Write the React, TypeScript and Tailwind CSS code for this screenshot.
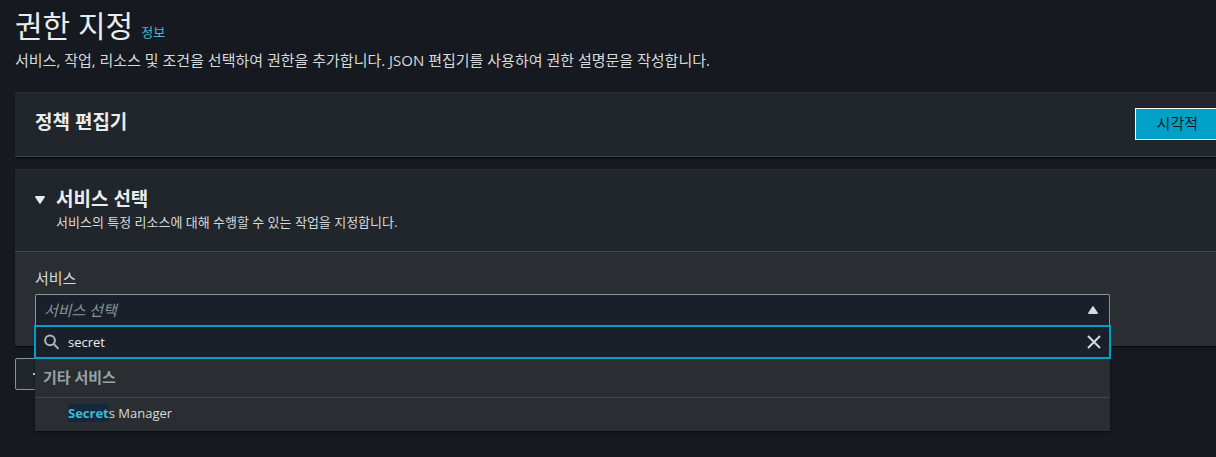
import { useState } from "react";

const SERVICES = ["Secrets Manager"];

function Highlight({ text, query }: { text: string; query: string }) {
  const at = query ? text.toLowerCase().indexOf(query.toLowerCase()) : -1;
  if (at < 0) return <>{text}</>;
  return (
    <>
      {text.slice(0, at)}
      <mark className="bg-[#12293b] font-bold text-[#44b9d6]">{text.slice(at, at + query.length)}</mark>
      {text.slice(at + query.length)}
    </>
  );
}

function ServiceSelect() {
  const [query, setQuery] = useState("secret");
  const matches = SERVICES.filter((s) => s.toLowerCase().includes(query.toLowerCase()));

  return (
    <div className="relative">
      <button
        id="service"
        type="button"
        aria-haspopup="listbox"
        aria-expanded="true"
        className="flex h-8 w-full items-center justify-between rounded-t-xs border border-b-0 border-[#879596] bg-[#1a2029] pr-[11px] pb-0.5 pl-2 text-left"
      >
        <span className="text-[#879596] italic">서비스 선택</span>
        <svg viewBox="0 0 10 8" className="h-2 w-2.5" aria-hidden="true">
          <path d="M5 0.8 9.2 7.2H0.8Z" fill="#d5dbdb" stroke="#d5dbdb" strokeWidth="1.4" strokeLinejoin="round" />
        </svg>
      </button>

      <div className="absolute inset-x-0 top-full z-10 bg-[#2a2e33] shadow-[0_1px_2px_#000000a0]">
        <div className="-mx-px -mt-px flex h-[34px] items-center gap-2 border-2 border-[#00a1c9] bg-[#1a2029] px-2">
          <svg viewBox="0 0 16 16" className="size-4 shrink-0" fill="none" stroke="#aab7b8" strokeWidth="2" aria-hidden="true">
            <circle cx="6" cy="6.3" r="4.9" />
            <path d="m9.6 9.9 4.8 4.8" />
          </svg>
          <input
            type="text"
            aria-label="서비스 검색"
            value={query}
            onChange={(e) => setQuery(e.target.value)}
            className="min-w-0 flex-1 bg-transparent text-[13px] text-[#eaeded] outline-none"
          />
          <button type="button" aria-label="지우기" onClick={() => setQuery("")} className="shrink-0">
            <svg viewBox="0 0 14 14" className="size-3.5" fill="none" stroke="#d5dbdb" strokeWidth="2" aria-hidden="true">
              <path d="m1 1 12 12M13 1 1 13" />
            </svg>
          </button>
        </div>
        <div className="border-b border-[#414750] px-2 pt-2 pb-2.5 font-bold text-[#95a5a6]">기타 서비스</div>
        <ul role="listbox" aria-label="기타 서비스">
          {matches.map((name) => (
            <li key={name} role="option" aria-selected="false" className="px-[33px] pt-[5px] pb-2 text-[13px] leading-5 text-[#d5dbdb]">
              <Highlight text={name} query={query} />
            </li>
          ))}
        </ul>
      </div>
    </div>
  );
}

export default function App() {
  return (
    <main className="min-h-screen overflow-x-hidden bg-[#16191f] pt-2 pl-[15px] font-['Open_Sans','Noto_Sans_CJK_KR',sans-serif] text-[15px] leading-5 text-[#d5dbdb]">
      <header>
        <div className="flex items-baseline gap-2">
          <h1 className="text-[30px] leading-9 text-[#eaeded]">권한 지정</h1>
          <a href="#info" className="text-[13px] leading-5 text-[#44b9d6]">정보</a>
        </div>
        <p className="mt-1.5">
          서비스, 작업, 리소스 및 조건을 선택하여 권한을 추가합니다. JSON 편집기를 사용하여 권한 설명문을 작성합니다.
        </p>
      </header>

      <section className="mt-[22px] flex items-start justify-between border-t border-b border-t-[#2a2e33] border-b-[#414750] bg-[#21252c] pt-[15px] pb-4 pl-5 shadow-[0_1px_1px_#00000090]">
        <h2 className="text-[19px] leading-7 font-bold text-[#eaeded]">정책 편집기</h2>
        <button type="button" aria-pressed="true" className="h-8 border border-r-0 border-white bg-[#00a1c9] pr-[18px] pl-[21px] pb-0.5 text-[#16191f]">
          시각적
        </button>
      </section>

      <section className="mt-3 border-t border-[#2a2e33] bg-[#2a2e33] shadow-[0_1px_1px_#00000090]">
        <div className="flex items-start gap-[11px] border-b border-[#414750] bg-[#21252c] pt-[15px] pb-5 pl-5">
          <button type="button" aria-label="서비스 선택 접기" aria-expanded="true" className="mt-[11px]">
            <svg viewBox="0 0 10 8" className="h-2 w-2.5" aria-hidden="true">
              <path d="M5 7.2 0.8 0.8H9.2Z" fill="#eaeded" stroke="#eaeded" strokeWidth="1.4" strokeLinejoin="round" />
            </svg>
          </button>
          <div>
            <h2 className="text-[19px] leading-7 font-bold text-[#eaeded]">서비스 선택</h2>
            <p className="text-[13px] leading-[18px]">서비스의 특정 리소스에 대해 수행할 수 있는 작업을 지정합니다.</p>
          </div>
        </div>
        <div className="pt-4 pr-[106px] pb-5 pl-5">
          <label htmlFor="service" className="mb-1.5 block">서비스</label>
          <ServiceSelect />
        </div>
      </section>

      <button type="button" aria-label="권한 추가" className="mt-3 flex h-8 w-40 items-center rounded-xs border border-[#879596] bg-[#21252c] pl-[17px]">
        <svg viewBox="0 0 12 12" className="size-3" stroke="#d5dbdb" strokeWidth="2" aria-hidden="true">
          <path d="M0 6h12M6 0v12" />
        </svg>
      </button>
    </main>
  );
}
